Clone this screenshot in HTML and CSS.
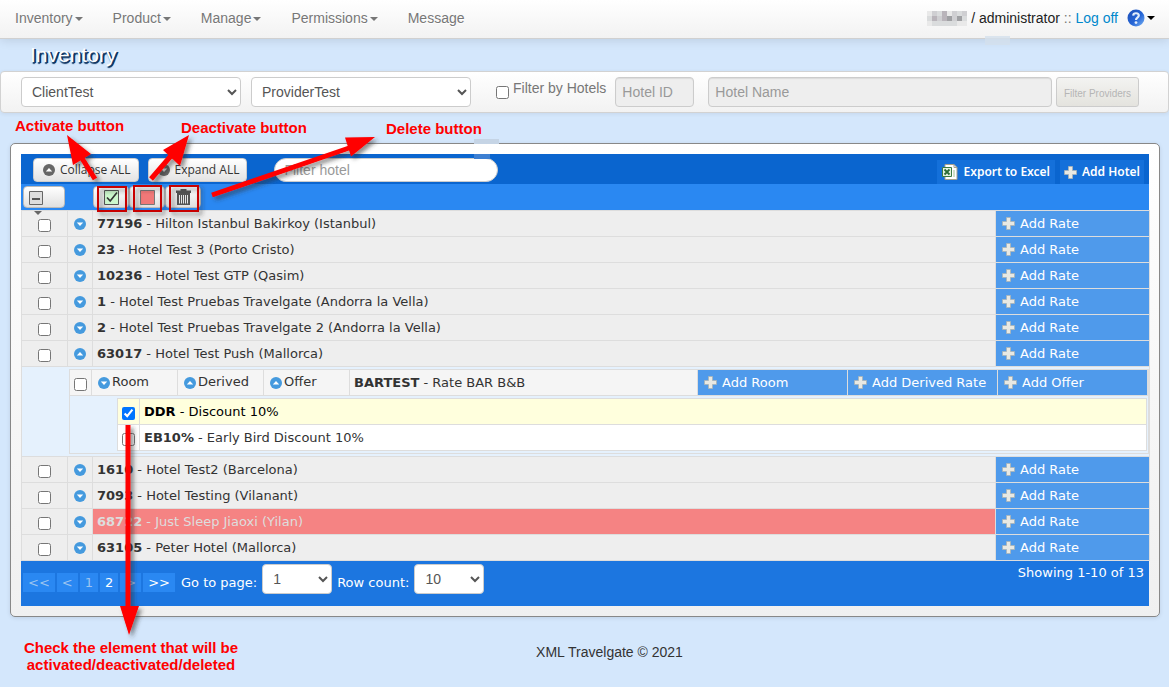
FILE: index.html
```
<!DOCTYPE html>
<html lang="en">
<head>
<meta charset="utf-8">
<title>Inventory</title>
<link rel="stylesheet" href="styles.css">
</head>
<body>
<svg class="symbols" aria-hidden="true">
  <defs>
    <linearGradient id="ball" x1="0" y1="0" x2="1" y2="1"><stop offset="0" stop-color="#1f4fb5"/><stop offset=".55" stop-color="#2565d6"/><stop offset="1" stop-color="#7ab4f5"/></linearGradient>
    <filter id="drop" x="-30%" y="-30%" width="160%" height="160%"><feDropShadow dx="3" dy="3" stdDeviation="2" flood-color="#333" flood-opacity=".55"/></filter>
  </defs>
  <symbol id="down" viewBox="0 0 12 12"><circle cx="6" cy="6" r="6" fill="currentColor"/><path d="M2.8 4.6h6.4L6 8z" fill="#fff"/></symbol>
  <symbol id="up" viewBox="0 0 12 12"><circle cx="6" cy="6" r="6" fill="currentColor"/><path d="M2.8 7.4h6.4L6 4z" fill="#fff"/></symbol>
  <symbol id="plus" viewBox="0 0 13 13"><path d="M4.5.5h4v4h4v4h-4v4h-4v-4h-4v-4h4z" fill="#e9e9e3" stroke="#a9b3b5" stroke-width=".8"/></symbol>
</svg>

<nav class="navbar">
  <a href="#">Inventory<i class="caret"></i></a>
  <a href="#">Product<i class="caret"></i></a>
  <a href="#">Manage<i class="caret"></i></a>
  <a href="#">Permissions<i class="caret"></i></a>
  <a href="#">Message</a>
  <div class="user">
    <svg class="masked" width="40" height="15" viewBox="0 0 40 15" aria-hidden="true">
      <path fill="#e9e9e9" d="M0 0h40v15H0z"/>
      <path fill="#cfcfd2" d="M5 0h5v5H5zM25 0h5v5h-5zM10 5h5v5h-5zM25 5h10v5H25zM35 0h5v5h-5z"/>
      <path fill="#b9b4ba" d="M5 5h5v5H5zM15 0h5v10h-5zM20 5h5v5h-5z"/>
      <path fill="#9fa0a3" d="M30 5h5v5h-5zM20 5h5v5h-5z"/>
      <path fill="#dadcdd" d="M0 5h5v5H0zM10 0h5v5h-5zM30 0h5v5h-5zM35 5h5v5h-5zM5 10h25v5H5z"/>
    </svg>
    <span>/ administrator <span class="sep">::</span> <a class="logoff" href="#">Log off</a></span>
    <button class="help" type="button" aria-label="Help">
      <svg width="18" height="18" viewBox="0 0 18 18"><circle cx="9" cy="9" r="8.5" fill="url(#ball)"/><path d="M6.2 6.6C6.3 3.4 11.8 3.5 11.8 6.6 11.8 8.7 9 8.6 9 10.9" fill="none" stroke="#e3edfb" stroke-width="2.2"/><circle cx="9" cy="13.6" r="1.4" fill="#e3edfb"/></svg>
      <i class="caret"></i>
    </button>
    <i class="patch"></i>
  </div>
</nav>

<h1>Inventory</h1>

<form class="filters">
  <select class="wide" aria-label="Client"><option>ClientTest</option></select>
  <select class="wide" aria-label="Provider"><option>ProviderTest</option></select>
  <div class="by-hotels"><input type="checkbox" id="byHotels"><label for="byHotels">Filter by Hotels</label></div>
  <input class="hotel-id" type="text" placeholder="Hotel ID" aria-label="Hotel ID" disabled>
  <input class="hotel-name" type="text" placeholder="Hotel Name" aria-label="Hotel Name" disabled>
  <button class="filter-btn" type="button" disabled>Filter Providers</button>
</form>

<main class="panel">
  <div class="bar">
    <button class="light" type="button"><svg class="dot"><use href="#up"/></svg>Collapse ALL</button>
    <button class="light" type="button"><svg class="dot"><use href="#down"/></svg>Expand ALL</button>
    <input class="search" type="text" placeholder="Filter hotel" aria-label="Filter hotel">
    <div class="bar-links">
      <a href="#"><svg width="16" height="16" viewBox="0 0 16 16"><path d="M3 .5h9l3 3v12H3z" fill="#fff" stroke="#a5a18e"/><path d="M12 .5v3h3" fill="none" stroke="#a5a18e"/><path d="M12 6v7" stroke="#9fbf8f"/><path d="M.5 3.5h9v9h-9z" fill="#e4f1df" stroke="#3c7a40"/><path d="M2.5 5.5l5 5M7.500 5.500l-5 5" stroke="#2b6b35" stroke-width="1.8"/></svg>Export to Excel</a>
      <a href="#"><svg class="plus"><use href="#plus"/></svg>Add Hotel</a>
    </div>
  </div>
  <div class="actions">
    <button class="tool pick" type="button" aria-label="Select"><svg width="14" height="14" viewBox="0 0 14 14"><path d="M.5.500h13v13H.5z" fill="#ddd" stroke="#666"/><path d="M3 8h8" stroke="#555" stroke-width="2"/></svg></button>
    <div class="tool-set">
      <button class="tool" type="button" aria-label="Activate"><svg width="15" height="15" viewBox="0 0 15 15"><path d="M.5.500h14v14H.5z" fill="#ccf7cc" stroke="#555"/><path d="M3 7.500l3.200 3.500L13 2.500" fill="none" stroke="#333" stroke-width="1.600"/></svg></button>
      <button class="tool" type="button" aria-label="Deactivate"><svg width="15" height="15" viewBox="0 0 15 15"><path d="M.5.500h14v14H.5z" fill="#f07878" stroke="#777"/></svg></button>
      <button class="tool" type="button" aria-label="Delete"><svg width="15" height="16" viewBox="0 0 15 16"><path d="M0 1.500h4.500V0h6v1.500H15V4H0zM1 4h13v12H1z" fill="#555"/><path d="M3.500 6v8.500M5.500 6v8.500M7.500 6v8.500M9.500 6v8.500M11.500 6v8.500" stroke="#e6e6e6"/></svg></button>
    </div>
  </div>

  <table class="grid hotels">
    <colgroup><col class="c-check"><col class="c-toggle"><col><col class="c-add"></colgroup>
    <tbody>
      <tr><td class="check"><input type="checkbox" aria-label="77196"></td><td class="toggle"><button type="button" aria-label="Expand"><svg class="dot"><use href="#down"/></svg></button></td><td><b>77196</b> - Hilton Istanbul Bakirkoy (Istanbul)</td><td class="add"><button type="button"><svg class="plus"><use href="#plus"/></svg>Add Rate</button></td></tr>
      <tr><td class="check"><input type="checkbox" aria-label="23"></td><td class="toggle"><button type="button" aria-label="Expand"><svg class="dot"><use href="#down"/></svg></button></td><td><b>23</b> - Hotel Test 3 (Porto Cristo)</td><td class="add"><button type="button"><svg class="plus"><use href="#plus"/></svg>Add Rate</button></td></tr>
      <tr><td class="check"><input type="checkbox" aria-label="10236"></td><td class="toggle"><button type="button" aria-label="Expand"><svg class="dot"><use href="#down"/></svg></button></td><td><b>10236</b> - Hotel Test GTP (Qasim)</td><td class="add"><button type="button"><svg class="plus"><use href="#plus"/></svg>Add Rate</button></td></tr>
      <tr><td class="check"><input type="checkbox" aria-label="1"></td><td class="toggle"><button type="button" aria-label="Expand"><svg class="dot"><use href="#down"/></svg></button></td><td><b>1</b> - Hotel Test Pruebas Travelgate (Andorra la Vella)</td><td class="add"><button type="button"><svg class="plus"><use href="#plus"/></svg>Add Rate</button></td></tr>
      <tr><td class="check"><input type="checkbox" aria-label="2"></td><td class="toggle"><button type="button" aria-label="Expand"><svg class="dot"><use href="#down"/></svg></button></td><td><b>2</b> - Hotel Test Pruebas Travelgate 2 (Andorra la Vella)</td><td class="add"><button type="button"><svg class="plus"><use href="#plus"/></svg>Add Rate</button></td></tr>
      <tr><td class="check"><input type="checkbox" aria-label="63017"></td><td class="toggle"><button type="button" aria-label="Collapse"><svg class="dot"><use href="#up"/></svg></button></td><td><b>63017</b> - Hotel Test Push (Mallorca)</td><td class="add"><button type="button"><svg class="plus"><use href="#plus"/></svg>Add Rate</button></td></tr>
      <tr>
        <td class="detail" colspan="4">
          <div class="nested">
            <table class="grid rate">
              <colgroup><col class="c-small"><col class="c-kind"><col class="c-kind"><col class="c-kind"><col><col class="c-action"><col class="c-action"><col class="c-action"></colgroup>
              <tbody><tr>
                <td class="check"><input type="checkbox" aria-label="BARTEST"></td>
                <td class="kind"><button type="button"><svg class="dot"><use href="#down"/></svg><span>Room</span></button></td>
                <td class="kind"><button type="button"><svg class="dot"><use href="#up"/></svg><span>Derived</span></button></td>
                <td class="kind"><button type="button"><svg class="dot"><use href="#up"/></svg><span>Offer</span></button></td>
                <td><b>BARTEST</b> - Rate BAR B&amp;B</td>
                <td class="add"><button type="button"><svg class="plus"><use href="#plus"/></svg>Add Room</button></td>
                <td class="add"><button type="button"><svg class="plus"><use href="#plus"/></svg>Add Derived Rate</button></td>
                <td class="add"><button type="button"><svg class="plus"><use href="#plus"/></svg>Add Offer</button></td>
              </tr></tbody>
            </table>
            <div class="offers">
              <table class="grid offer">
                <colgroup><col class="c-small"><col></colgroup>
                <tbody>
                  <tr class="picked"><td class="check"><input type="checkbox" id="ddr" checked></td><td><label for="ddr"><b>DDR</b> - Discount 10%</label></td></tr>
                  <tr><td class="check"><input type="checkbox" id="eb"></td><td><label for="eb"><b>EB10%</b> - Early Bird Discount 10%</label></td></tr>
                </tbody>
              </table>
            </div>
          </div>
        </td>
      </tr>
      <tr><td class="check"><input type="checkbox" aria-label="1610"></td><td class="toggle"><button type="button" aria-label="Expand"><svg class="dot"><use href="#down"/></svg></button></td><td><b>1610</b> - Hotel Test2 (Barcelona)</td><td class="add"><button type="button"><svg class="plus"><use href="#plus"/></svg>Add Rate</button></td></tr>
      <tr><td class="check"><input type="checkbox" aria-label="7093"></td><td class="toggle"><button type="button" aria-label="Expand"><svg class="dot"><use href="#down"/></svg></button></td><td><b>7093</b> - Hotel Testing (Vilanant)</td><td class="add"><button type="button"><svg class="plus"><use href="#plus"/></svg>Add Rate</button></td></tr>
      <tr><td class="check"><input type="checkbox" aria-label="68722"></td><td class="toggle"><button type="button" aria-label="Expand"><svg class="dot"><use href="#down"/></svg></button></td><td class="inactive"><b>68722</b> - Just Sleep Jiaoxi (Yilan)</td><td class="add"><button type="button"><svg class="plus"><use href="#plus"/></svg>Add Rate</button></td></tr>
      <tr><td class="check"><input type="checkbox" aria-label="63105"></td><td class="toggle"><button type="button" aria-label="Expand"><svg class="dot"><use href="#down"/></svg></button></td><td><b>63105</b> - Peter Hotel (Mallorca)</td><td class="add"><button type="button"><svg class="plus"><use href="#plus"/></svg>Add Rate</button></td></tr>
    </tbody>
  </table>

  <div class="pager">
    <div class="pages">
      <a class="off" href="#">&lt;&lt;</a><a class="off" href="#">&lt;</a><a class="off" href="#">1</a><a href="#">2</a><a class="off" href="#">&gt;</a><a href="#">&gt;&gt;</a>
    </div>
    <label for="page">Go to page:</label>
    <select id="page"><option>1</option></select>
    <label for="rows">Row count:</label>
    <select id="rows"><option>10</option></select>
    <span class="showing">Showing 1-10 of 13</span>
  </div>
</main>

<footer>XML Travelgate © 2021</footer>

<svg class="marks" width="520" height="687" viewBox="0 0 520 687" aria-hidden="true">
  <path d="M34 211h8l-4 4z" fill="#666"/>
  <path d="M474 139h25v5h-25z" fill="#c5d4e5"/>
  <path d="M474 154h16v5h-16z" fill="#3d7fd2"/>
  <g filter="url(#drop)">
    <g fill="none" stroke="#c80000" stroke-width="2"><path d="M98 187h28v24H98zM134 186h27v25h-27zM170 186h28v25h-28z"/></g>
    <g fill="none" stroke="#f00" stroke-width="5"><path d="M95 179L78 152M151 179L176 150M212 195L352 147M128 425V610"/></g>
    <path fill="#f00" d="M67 135l24 19-18 11zM189 135l-26 15 17 16zM375 137l-30 .5 6 19zM129 635l-9-29h19z"/>
  </g>
</svg>
<span class="note n-activate">Activate button</span>
<span class="note n-deactivate">Deactivate button</span>
<span class="note n-delete">Delete button</span>
<span class="note n-check">Check the element that will be activated/deactivated/deleted</span>
</body>
</html>
```
FILE: styles.css
```
* { box-sizing: border-box; }
body {
  position: relative;
  margin: 0;
  min-height: 100vh;
  background: #d4e7fc;
  color: #333;
  font: 14px/20px "Liberation Sans", Arial, sans-serif;
}
button, select, input { font: inherit; margin: 0; }
button { cursor: pointer; }
a { text-decoration: none; }
.symbols { position: absolute; width: 0; height: 0; }
.dot { width: 12px; height: 12px; flex: none; }
.plus { width: 13px; height: 13px; flex: none; }

.navbar {
  display: flex;
  align-items: center;
  gap: 30px;
  height: 39px;
  padding: 0 14px 2px 15px;
  background: linear-gradient(#fff, #f2f2f2);
  border-bottom: 1px solid #d0d0d0;
  box-shadow: 0 1px 10px rgba(0, 0, 0, .12);
}
.navbar > a { color: #777; text-shadow: 0 1px 0 #fff; white-space: nowrap; }
.caret {
  display: inline-block;
  margin-left: 2px;
  border: 4px solid transparent;
  border-top-color: currentColor;
  border-bottom: 0;
  vertical-align: middle;
}
.user { position: relative; display: flex; align-items: center; gap: 4px; margin-left: auto; color: #222; white-space: nowrap; }
.sep { color: #777; }
.logoff { color: #08c; }
.help { display: flex; align-items: center; padding: 0; margin-left: 5px; border: 0; background: none; color: #000; }
.patch { position: absolute; left: 58px; top: 28px; width: 25px; height: 9px; background: #d3e0ec; opacity: .8; }

h1 {
  margin: 0;
  padding: 4px 30px 4px;
  color: #fff;
  font-size: 21px;
  font-weight: 400;
  line-height: 24px;
  text-shadow: 1px 2px 1px #0f3764, 2px 1px 0 #0f3764;
}

.filters {
  display: flex;
  align-items: center;
  padding: 5px 29px 5px 20px;
  border: 1px solid #d2d2d2;
  border-radius: 4px;
  background: linear-gradient(#fff, #f2f2f2);
  box-shadow: 0 1px 4px rgba(0, 0, 0, .07);
}
select, .filters input[type=text] {
  height: 30px;
  border: 1px solid #ccc;
  border-radius: 4px;
  background: #fff;
  color: #555;
  padding: 4px 6px;
}
.wide { width: 220px; margin-right: 10px; }
.by-hotels { display: flex; align-items: center; gap: 4px; margin: 0 9px 0 15px; color: #777; white-space: nowrap; }
.by-hotels label { margin-bottom: 8px; }
input[type=checkbox] { width: 13px; height: 13px; flex: none; }
.filters input[type=text] { background: #eee; box-shadow: inset 0 1px 1px rgba(0, 0, 0, .08); }
.filters input::placeholder, .search::placeholder { color: #999; }
.filters .hotel-id { width: 79px; margin-right: 14px; }
.hotel-name { flex: 1; min-width: 0; margin-right: 4px; }
.filter-btn {
  width: 83px;
  height: 30px;
  padding: 4px 0 0;
  border: 1px solid #ccc;
  border-radius: 3px;
  background: linear-gradient(#f3f3f1, #e4e3de);
  color: #b5b5b5;
  font-size: 10px;
  line-height: 20px;
}

.panel {
  margin: 30px 9px 0 10px;
  padding: 10px;
  border: 1px solid #888;
  border-radius: 5px;
  background: linear-gradient(#fff, #f0f0f0);
  box-shadow: 0 1px 4px rgba(0, 0, 0, .1);
}
.bar { display: flex; align-items: center; gap: 9px; height: 30px; padding: 1px 5px 0 12px; background: #0a65cf; }
.light {
  display: flex;
  align-items: center;
  gap: 5px;
  height: 24px;
  padding: 0 7px 0 9px;
  border: 1px solid #ccc;
  border-radius: 4px;
  background: linear-gradient(#fff, #e3e3e3);
  color: #333;
  font: 12px/20px "Open Sans", sans-serif;
  white-space: nowrap;
}
.light .dot { color: #666; }
.search {
  width: 224px;
  height: 24px;
  margin-left: 18px;
  padding: 0 9px;
  border: 1px solid #ccc;
  border-radius: 12px;
  background: #fff;
}
.bar-links { display: flex; align-self: flex-end; gap: 5px; margin-left: auto; }
.bar-links a {
  display: flex;
  align-items: center;
  gap: 5px;
  height: 24px;
  padding: 0 4px;
  background: #1470da;
  color: #fff;
  font: 600 12px/24px "Noto Sans", sans-serif;
  white-space: nowrap;
}
.bar-links a:first-child { padding: 0 5px; }
.actions { display: flex; gap: 28px; height: 26px; padding: 2px; background: #2a88f2; }
.tool {
  display: flex;
  align-items: center;
  justify-content: center;
  width: 36px;
  height: 22px;
  padding: 0;
  border: 1px solid #bbb;
  border-radius: 4px;
  background: linear-gradient(#fff, #e0e0e0);
}
.pick { justify-content: flex-start; width: 42px; padding: 2px 5px 0; }
.tool-set { display: flex; }

.grid { width: 100%; border-collapse: collapse; table-layout: fixed; font: 13px/16px "DejaVu Sans", Verdana, sans-serif; }
.grid td { height: 26px; padding: 0 4px; border: 1px solid #ddd; background: #eee; white-space: nowrap; overflow: hidden; }
.hotels { width: calc(100% + 1px); margin-right: -1px; }
.c-check { width: 46px; }
.c-toggle { width: 25px; }
.c-add { width: 154px; }
.c-small { width: 22px; }
.c-kind { width: 86px; }
.c-action { width: 150px; }
.grid td.check, .grid td.toggle { padding: 0; text-align: center; }
.grid .check input { display: block; margin: 4px auto 0; }
.toggle button { display: block; width: 12px; height: 12px; margin: 0 auto; padding: 0; border: 0; background: none; }
.toggle .dot { display: block; }
.grid .dot { color: #459ade; }
.grid td.inactive { background: #f58383; color: #ddd; }
.grid td.add { padding: 0; background: #4f9aeb; }
.add button {
  display: flex;
  align-items: center;
  gap: 5px;
  width: 100%;
  height: 24px;
  padding: 0 6px;
  border: 0;
  background: none;
  color: #fff;
}
.grid .detail { padding: 2px 0 2px 47px; background: #e5f1fd; }
.nested { border: 1px solid #ddd; border-top: 0; padding-bottom: 2px; }
.rate { margin-left: -1px; width: calc(100% + 1px); }
.grid.rate td { background: #f5f5f5; }
.grid.rate td.add { background: #4f9aeb; }
.kind button { display: flex; align-items: center; gap: 2px; padding: 0 6px; border: 0; background: none; color: inherit; line-height: 20px; }
.kind span { padding-bottom: 2px; }
.grid td.kind { padding: 0; }
.offers { padding: 2px 1px 0 47px; }
.grid.offer td { background: #fff; }
.grid.offer .picked td { background: #ffd; color: #000; }

.pager {
  display: flex;
  align-items: center;
  height: 45px;
  padding: 0 5px 2px 2px;
  background: #1c76e0;
  color: #fff;
  font: 13px/19px "DejaVu Sans", Verdana, sans-serif;
  white-space: nowrap;
}
.pages { display: flex; gap: 2px; margin-right: 6px; }
.pages a { padding: 0 5px; background: #2a88f2; color: #fff; }
.pages .off { color: #9cc4f0; }
.pager select { width: 70px; margin: 0 5px 8px; font: 14px/20px "Liberation Sans", Arial, sans-serif; }
.showing { margin: 0 0 20px auto; }
footer { padding: 25px 0 20px 50px; text-align: center; }

.marks { position: absolute; left: 0; top: 0; pointer-events: none; }
.note { position: absolute; color: #f00; font-size: 15px; font-weight: 700; line-height: 17px; white-space: nowrap; }
.n-activate { left: 15px; top: 117px; }
.n-deactivate { left: 181px; top: 119px; }
.n-delete { left: 386px; top: 120px; }
.n-check { left: 20px; top: 639px; width: 222px; text-align: center; white-space: normal; }
```
